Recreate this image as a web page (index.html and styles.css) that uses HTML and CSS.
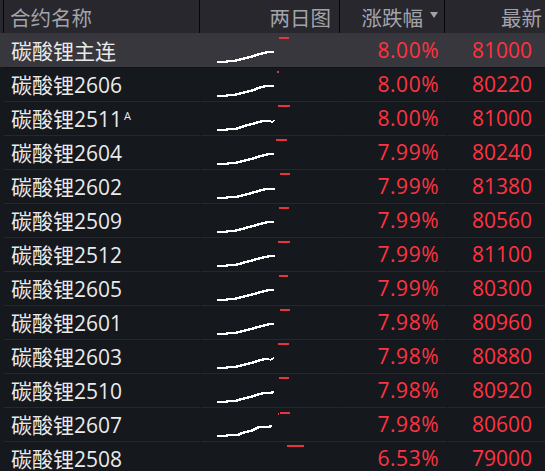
FILE: index.html
```html
<!DOCTYPE html>
<html lang="zh">
<head>
<meta charset="utf-8">
<title>碳酸锂</title>
<link rel="stylesheet" href="styles.css">
</head>
<body>
<div class="table">
  <div class="row head">
    <div class="c0"></div>
    <div class="c name">合约名称</div>
    <div class="c chart">两日图</div>
    <div class="c chg">涨跌幅<span class="tri"></span></div>
    <div class="c last">最新</div>
  </div>

  <div class="row sel">
    <div class="c0"></div>
    <div class="c name">碳酸锂主连</div>
    <div class="c chart"><svg class="spark" width="100" height="33" viewBox="0 0 100 33"><polyline class="ln" points="7,28 17,28 17,27 26,27 26,26 30,26 30,25 34,25 34,24 38,24 38,23 42,23 42,22 45,22 45,21 48,21 48,20 52,20 52,19 56,19 56,18 64,18"/><line class="rd" x1="69" y1="4" x2="79" y2="4"/></svg></div>
    <div class="c chg">8.00%</div>
    <div class="c last">81000</div>
  </div>

  <div class="row first">
    <div class="c0"></div>
    <div class="c name">碳酸锂2606</div>
    <div class="c chart"><svg class="spark" width="100" height="33" viewBox="0 0 100 33"><polyline class="ln" points="7,28 17,28 17,27 26,27 26,26 30,26 30,25 34,25 34,24 38,24 38,23 42,23 42,22 45,22 45,21 47,21 47,20 50,20 50,19 54,19 54,18 64,18"/><line class="rd" x1="67" y1="4" x2="69" y2="4"/></svg></div>
    <div class="c chg">8.00%</div>
    <div class="c last">80220</div>
  </div>

  <div class="row">
    <div class="c0"></div>
    <div class="c name">碳酸锂2511<sup class="mark">A</sup></div>
    <div class="c chart"><svg class="spark" width="100" height="33" viewBox="0 0 100 33"><polyline class="ln" points="7,28 17,28 17,27 27,27 27,26 30,26 30,25 33,25 33,24 36,24 36,23 40,23 40,22 44,22 44,21 47,21 47,20 51,20 51,19 60,19 62,20 64,19 65,18"/><line class="rd" x1="68" y1="4" x2="80" y2="4"/></svg></div>
    <div class="c chg">8.00%</div>
    <div class="c last">81000</div>
  </div>

  <div class="row">
    <div class="c0"></div>
    <div class="c name">碳酸锂2604</div>
    <div class="c chart"><svg class="spark" width="100" height="33" viewBox="0 0 100 33"><polyline class="ln" points="7,28 18,28 18,27 27,27 27,26 31,26 31,25 35,25 35,24 39,24 39,23 43,23 43,22 46,22 46,21 49,21 49,20 53,20 53,19 57,19 57,18 64,18"/><line class="rd" x1="66" y1="4" x2="77" y2="4"/></svg></div>
    <div class="c chg">7.99%</div>
    <div class="c last">80240</div>
  </div>

  <div class="row">
    <div class="c0"></div>
    <div class="c name">碳酸锂2602</div>
    <div class="c chart"><svg class="spark" width="100" height="33" viewBox="0 0 100 33"><polyline class="ln" points="7,28 17,28 17,27 28,27 28,26 32,26 32,25 36,25 36,24 40,24 40,23 43,23 43,22 47,22 47,21 50,21 50,20 54,20 54,19 64,19 64,18"/><line class="rd" x1="70" y1="4" x2="80" y2="4"/></svg></div>
    <div class="c chg">7.99%</div>
    <div class="c last">81380</div>
  </div>

  <div class="row">
    <div class="c0"></div>
    <div class="c name">碳酸锂2509</div>
    <div class="c chart"><svg class="spark" width="100" height="33" viewBox="0 0 100 33"><polyline class="ln" points="7,28 17,28 17,27 26,27 26,26 30,26 30,25 34,25 34,24 37,24 37,23 41,23 41,22 45,22 45,21 48,21 48,20 52,20 52,19 56,19 56,18 64,18"/><line class="rd" x1="69" y1="4" x2="79" y2="4"/></svg></div>
    <div class="c chg">7.99%</div>
    <div class="c last">80560</div>
  </div>

  <div class="row">
    <div class="c0"></div>
    <div class="c name">碳酸锂2512</div>
    <div class="c chart"><svg class="spark" width="100" height="33" viewBox="0 0 100 33"><polyline class="ln" points="7,28 17,28 17,27 27,27 27,26 31,26 31,25 34,25 34,24 38,24 38,23 42,23 42,22 45,22 45,21 49,21 49,20 53,20 53,19 58,19 58,18 64,18 64,17"/><line class="rd" x1="68" y1="4" x2="80" y2="4"/></svg></div>
    <div class="c chg">7.99%</div>
    <div class="c last">81100</div>
  </div>

  <div class="row">
    <div class="c0"></div>
    <div class="c name">碳酸锂2605</div>
    <div class="c chart"><svg class="spark" width="100" height="33" viewBox="0 0 100 33"><polyline class="ln" points="7,28 17,28 17,27 26,27 26,26 30,26 30,25 34,25 34,24 38,24 38,23 42,23 42,22 46,22 46,21 49,21 49,20 53,20 53,19 57,19 57,18 64,18"/><line class="rd" x1="69" y1="4" x2="78" y2="4"/></svg></div>
    <div class="c chg">7.99%</div>
    <div class="c last">80300</div>
  </div>

  <div class="row">
    <div class="c0"></div>
    <div class="c name">碳酸锂2601</div>
    <div class="c chart"><svg class="spark" width="100" height="33" viewBox="0 0 100 33"><polyline class="ln" points="7,28 17,28 17,27 27,27 27,26 31,26 31,25 35,25 35,24 39,24 39,23 43,23 43,22 46,22 46,21 50,21 50,20 54,20 54,19 58,19 58,18 64,18"/><line class="rd" x1="70" y1="4" x2="80" y2="4"/></svg></div>
    <div class="c chg">7.98%</div>
    <div class="c last">80960</div>
  </div>

  <div class="row">
    <div class="c0"></div>
    <div class="c name">碳酸锂2603</div>
    <div class="c chart"><svg class="spark" width="100" height="33" viewBox="0 0 100 33"><polyline class="ln" points="7,28 17,28 17,27 27,27 27,26 31,26 31,25 35,25 35,24 39,24 39,23 43,23 43,22 46,22 46,21 49,21 49,20 53,20 53,19 59,19 60,20 62,19 64,18"/><line class="rd" x1="68" y1="4" x2="79" y2="4"/></svg></div>
    <div class="c chg">7.98%</div>
    <div class="c last">80880</div>
  </div>

  <div class="row">
    <div class="c0"></div>
    <div class="c name">碳酸锂2510</div>
    <div class="c chart"><svg class="spark" width="100" height="33" viewBox="0 0 100 33"><polyline class="ln" points="7,28 17,28 17,27 27,27 27,26 30,26 30,25 34,25 34,24 38,24 38,23 42,23 42,22 45,22 45,21 48,21 48,20 52,20 52,19 62,19 62,18 64,18"/><line class="rd" x1="69" y1="4" x2="79" y2="4"/></svg></div>
    <div class="c chg">7.98%</div>
    <div class="c last">80920</div>
  </div>

  <div class="row">
    <div class="c0"></div>
    <div class="c name">碳酸锂2607</div>
    <div class="c chart"><svg class="spark" width="100" height="33" viewBox="0 0 100 33"><polyline class="ln" points="7,28 17,28 17,27 29,27 29,26 31,26 31,25 34,25 34,24 38,24 38,23 42,23 42,22 44,22 44,21 46,21 46,20 48,20 48,19 60,19 60,18 62,18"/><line class="rd" x1="68" y1="6" x2="69" y2="6"/><line class="rd" x1="70" y1="5" x2="80" y2="5"/></svg></div>
    <div class="c chg">7.98%</div>
    <div class="c last">80600</div>
  </div>

  <div class="row">
    <div class="c0"></div>
    <div class="c name">碳酸锂2508</div>
    <div class="c chart"><svg class="spark" width="100" height="33" viewBox="0 0 100 33"><line class="rd" x1="77" y1="4" x2="94" y2="4"/></svg></div>
    <div class="c chg">6.53%</div>
    <div class="c last">79000</div>
  </div>
</div>
</body>
</html>
```

FILE: styles.css
```css
html, body {
  margin: 0;
  padding: 0;
  background: #15181d;
  width: 545px;
  height: 471px;
  overflow: hidden;
}

.table {
  width: 545px;
  font-family: "Open Sans", "Noto Sans CJK SC", sans-serif;
}

.row {
  display: flex;
  height: 34px;
}

.c0 {
  width: 3px;
  flex: none;
}

.c {
  flex: none;
  height: 33px;
  border-top: 1px solid #25282e;
  display: flex;
  align-items: center;
  white-space: nowrap;
  font-size: 20px;
}

.name {
  width: 196px;
  padding-left: 7px;
  box-sizing: border-box;
  margin-left: 1px;
  color: #eaeaea;
  font-size: 21px;
}

.chart {
  width: 140px;
  margin-left: 1px;
}

.chg {
  width: 105px;
  margin-left: 1px;
  justify-content: flex-end;
  padding-right: 8px;
  box-sizing: border-box;
  color: #ff3341;
  font-size: 21px;
  letter-spacing: 0.5px;
}

.last {
  width: 97px;
  margin-left: 1px;
  justify-content: flex-end;
  padding-right: 13px;
  box-sizing: border-box;
  color: #ff3341;
  font-size: 21px;
  letter-spacing: 0;
}

/* header */
.head {
  height: 33px;
  background: #27272d;
}

.head .c0 {
  border-right: 1px solid #060608;
}

.head .c {
  border-top: none;
  height: 33px;
  color: #a3a3aa;
  font-size: 20.5px;
  letter-spacing: 0;
  margin-left: 0;
  border-right: 1px solid #060608;
}

.head .name {
  width: 196px;
  padding-left: 6px;
}

.head .chart {
  width: 140px;
  justify-content: flex-end;
  padding-right: 8px;
  box-sizing: border-box;
}

.head .chg {
  width: 105px;
  padding-right: 6px;
}

.head .last {
  width: 97px;
  justify-content: flex-start;
  padding-left: 56px;
  padding-right: 0;
  border-right: none;
}

.tri {
  display: inline-block;
  width: 0;
  height: 0;
  margin-left: 7px;
  margin-top: -3px;
  border-left: 4px solid transparent;
  border-right: 4px solid transparent;
  border-top: 6px solid #a3a3aa;
}

/* selected row */
.sel {
  background: #37373d;
}

.sel .c {
  border-top-color: #37373d;
}

.first .c {
  border-top-color: #101216;
}

.mark {
  font-size: 11px;
  align-self: flex-start;
  margin-top: 6px;
  margin-left: 2px;
  color: #eaeaea;
}

.spark {
  display: block;
  margin-left: 9px;
  overflow: visible;
}

.ln {
  fill: none;
  stroke: #ffffff;
  stroke-width: 1.4;
  shape-rendering: crispEdges;
}

.rd {
  stroke: #e8333f;
  stroke-width: 1.6;
  shape-rendering: crispEdges;
}
```
